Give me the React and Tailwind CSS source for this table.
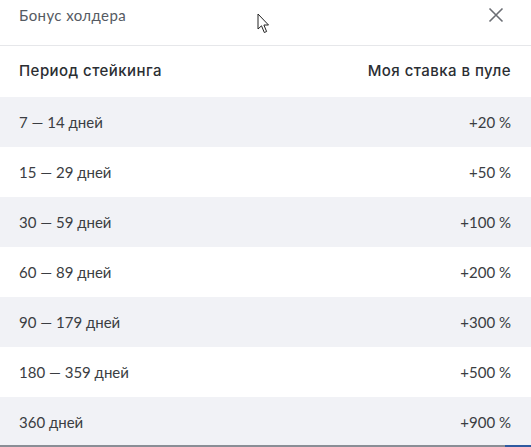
import React from 'react'

const rows = [
  ['7 — 14 дней', '+20 %'],
  ['15 — 29 дней', '+50 %'],
  ['30 — 59 дней', '+100 %'],
  ['60 — 89 дней', '+200 %'],
  ['90 — 179 дней', '+300 %'],
  ['180 — 359 дней', '+500 %'],
  ['360 дней', '+900 %']
]

const App = () => {
  return (
    <div
      className="relative w-[531px] h-[447px] overflow-hidden bg-white text-[#2f3238]"
      style={{ fontFamily: 'Lato, "Open Sans", sans-serif' }}
    >
      {/* шапка */}
      <div className="h-[46px] flex items-center justify-between pl-[19px] pr-[27px] border-b border-[#e6e7ea]">
        <span className="text-[15px] tracking-[0.4px] text-[#555a62] -mt-[14px]">Бонус холдера</span>
        <svg width="16" height="16" viewBox="0 0 16 16" className="-mt-[15px]">
          <path d="M1.5 1.5L14.5 14.5M14.5 1.5L1.5 14.5" stroke="#6b6e74" strokeWidth="1.6" />
        </svg>
      </div>
      {/* курсор */}
      <svg className="absolute left-[257px] top-[13px]" width="16" height="22" viewBox="0 0 16 22">
        <path
          d="M1 1 L1 16 L4.5 12.8 L7.3 19.5 L9.6 18.5 L6.9 12 L11.5 12 Z"
          fill="#fff"
          stroke="#222"
          strokeWidth="1"
          strokeLinejoin="round"
        />
      </svg>
      <div
        className="h-[51px] flex items-center justify-between px-[19px] pr-[20px] text-[15px] tracking-[0.45px] font-medium text-[#2b2e33]"
        style={{ fontFamily: 'Inter, sans-serif' }}
      >
        <span>Период стейкинга</span>
        <span>Моя ставка в пуле</span>
      </div>
      {rows.map(([period, rate], i) => (
        <div
          key={period}
          className={
            'h-[50px] flex items-center justify-between pl-[19px] pr-[20px] text-[15px] text-[#3a3d42] ' +
            (i % 2 === 0 ? 'bg-[#f1f2f6]' : 'bg-white')
          }
        >
          <span>{period}</span>
          <span>{rate}</span>
        </div>
      ))}
      <div className="absolute left-0 bottom-0 w-full h-[2px] flex">
        <div className="flex-1 bg-[#8a8e96]" />
        <div className="w-[26px] bg-[#2f5aa0]" />
      </div>
    </div>
  )
}

export default App
